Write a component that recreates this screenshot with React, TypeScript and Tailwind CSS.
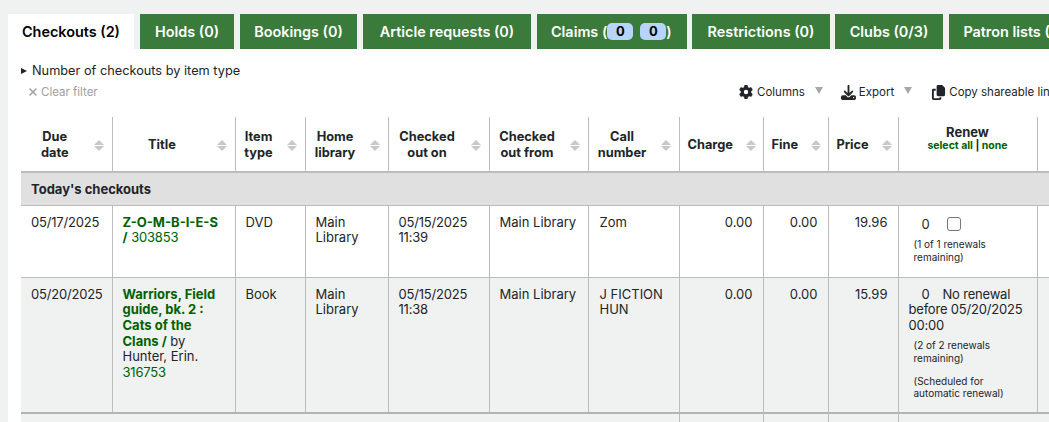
import { FaCopy, FaDownload, FaGear, FaXmark } from "react-icons/fa6";

function Sort() {
  return (
    <span className="flex flex-col items-center gap-[1px]">
      <span className="h-0 w-0 border-x-[5px] border-b-[5px] border-x-transparent border-b-[#c6c8c9]" />
      <span className="h-0 w-0 border-x-[5px] border-t-[5px] border-x-transparent border-t-[#c6c8c9]" />
    </span>
  );
}

function Th({ label }: { label: React.ReactNode }) {
  return (
    <th className="border-x border-b-[2px] border-[#bcbcbc] p-0 align-middle text-[12.8px] font-bold first:border-l-0">
      <div className="flex items-center justify-between gap-[13px] pt-[2px] pr-[8px] pl-[8px]">
        <span className="flex-1 text-center leading-4">{label}</span>
        <Sort />
      </div>
    </th>
  );
}

function Tab({ label, width }: { label: string; width: string }) {
  return <div className={`flex items-center justify-center bg-[#3a7b3c] text-white ${width}`}>{label}</div>;
}

const td = "border border-[#bcbcbc] px-[10px] pt-[9px] align-top leading-[15.7px]";
const tdNum = "border border-[#bcbcbc] px-[10px] pt-[9px] align-top leading-[15.7px] text-right";
const digits = "tracking-[-0.2px]";

export default function App() {
  return (
    <div className="h-[422px] w-[1049px] overflow-hidden bg-[#f0f1f1] pt-[14px] pl-2 font-['Inter','Liberation_Sans',sans-serif] text-[13px] text-[#212529]">
      <div className="flex h-[35px] w-[1100px] gap-[6px] text-[14.4px] font-semibold">
        <div className="flex w-[126px] items-center justify-center bg-white text-black">Checkouts (2)</div>
        <Tab label="Holds (0)" width="w-[94px]" />
        <Tab label="Bookings (0)" width="w-[117px]" />
        <Tab label="Article requests (0)" width="w-[168px]" />
        <div className="mr-[-1px] flex w-[150px] items-center bg-[#3a7b3c] pl-[14px] text-white">
          Claims (
          <span className="h-[17px] w-[26px] rounded-[5px] bg-[#b8d4fb] text-center text-[13px] leading-[17px] font-bold text-black">0</span>
          <span className="ml-[7px] h-[17px] w-[26px] rounded-[5px] bg-[#b8d4fb] text-center text-[13px] leading-[17px] font-bold text-black">0</span>
          )
        </div>
        <Tab label="Restrictions (0)" width="w-[138px] mr-[-1px]" />
        <Tab label="Clubs (0/3)" width="w-[108px]" />
        <Tab label="Patron lists (0)" width="w-[130px]" />
      </div>

      <div className="h-[400px] w-[1100px] bg-white pl-[13px]">
        <div className="flex h-[35px] items-center pt-[8px]">
          <span className="mr-[5px] h-0 w-0 border-y-[3.5px] border-l-[6px] border-y-transparent border-l-[#212529]" />
          <span className="text-[12.75px]">Number of checkouts by item type</span>
        </div>
        <div className="flex h-[33px] items-start text-[11.5px] leading-[16px]">
          <span className="ml-[6px] flex w-[72px] items-center gap-[2px] whitespace-nowrap text-[#a0a0a0]">
            <FaXmark size={12} />Clear filter
          </span>
          <div className="ml-[640px] flex items-center gap-[4px]">
            <FaGear size={14} />
            <span>Columns</span>
            <span className="mb-[4px] ml-[6px] h-0 w-0 border-x-[4px] border-t-[7px] border-x-transparent border-t-[#a8a8a8]" />
          </div>
          <div className="ml-[18px] flex items-center gap-[3px]">
            <FaDownload size={15} />
            <span>Export</span>
            <span className="mb-[4px] ml-[7px] h-0 w-0 border-x-[4px] border-t-[7px] border-x-transparent border-t-[#a8a8a8]" />
          </div>
          <div className="ml-[19px] flex items-center gap-[3px]">
            <FaCopy size={15} />
            <span className="whitespace-nowrap">Copy shareable link</span>
          </div>
        </div>

        <table className="w-[1067px] table-fixed border-collapse text-[13px]">
          <colgroup>
            <col className="w-[91px]" />
            <col className="w-[123px]" />
            <col className="w-[70px]" />
            <col className="w-[83px]" />
            <col className="w-[101px]" />
            <col className="w-[99px]" />
            <col className="w-[91px]" />
            <col className="w-[84px]" />
            <col className="w-[65px]" />
            <col className="w-[70px]" />
            <col className="w-[139px]" />
            <col className="w-[51px]" />
          </colgroup>
          <thead>
            <tr className="h-[55px]">
              <Th label={<>Due<br />date</>} />
              <Th label="Title" />
              <Th label={<>Item<br />type</>} />
              <Th label={<>Home<br />library</>} />
              <Th label={<>Checked<br />out on</>} />
              <Th label={<>Checked<br />out from</>} />
              <Th label={<>Call<br />number</>} />
              <Th label="Charge" />
              <Th label="Fine" />
              <Th label="Price" />
              <th className="border-x border-b-[2px] border-[#bcbcbc] p-0 pb-[11px] align-middle font-bold leading-[14px]">
                Renew
                <div className="mt-[1px] text-[10.5px] leading-[12px] font-bold text-[#006100]">
                  select all <span className="text-[#212529]">|</span> none
                </div>
              </th>
              <th className="border-x border-b-[2px] border-[#bcbcbc]" />
            </tr>
          </thead>
          <tbody>
            <tr className="h-[33px] bg-[#e0e0e0]">
              <td colSpan={12} className="border-y border-[#bcbcbc] px-[10px] pt-[2px] align-middle font-bold">Today's checkouts</td>
            </tr>
            <tr className="h-[72px]">
              <td className={`${td} ${digits} border-l-0`}>05/17/2025</td>
              <td className={td}>
                <span className="font-bold text-[#006100]">Z-O-M-B-I-E-S<br />/</span>{" "}
                <span className={`${digits} text-[#006100]`}>303853</span>
              </td>
              <td className={td}>DVD</td>
              <td className={td}>Main Library</td>
              <td className={`${td} ${digits}`}>05/15/2025 11:39</td>
              <td className={td}>Main Library</td>
              <td className={`${td} pl-[11px]`}>Zom</td>
              <td className={tdNum}>0.00</td>
              <td className={tdNum}>0.00</td>
              <td className={tdNum}>19.96</td>
              <td className="border border-[#bcbcbc] pt-[11px] pl-[15px] align-top leading-[15.7px]">
                <div className="flex items-start">
                  <span className="ml-[8px]">0</span>
                  <span className="ml-[17px] h-[14px] w-[14px] rounded-[3px] border border-[#767676] bg-white" />
                </div>
                <div className="mt-[6px] text-[10px] leading-[13px]">(1 of 1 renewals remaining)</div>
              </td>
              <td className="border border-[#bcbcbc]" />
            </tr>
            <tr className="h-[136px] border-b-[2px] border-[#b4b4b4] bg-[#f0f1f1]">
              <td className={`${td} ${digits} border-l-0`}>05/20/2025</td>
              <td className={td}>
                <span className="font-bold text-[#006100]">Warriors, Field guide, bk. 2 : Cats of the Clans /</span> by Hunter, Erin.{" "}
                <span className={`${digits} text-[#006100]`}>316753</span>
              </td>
              <td className={td}>Book</td>
              <td className={td}>Main Library</td>
              <td className={`${td} ${digits}`}>05/15/2025 11:38</td>
              <td className={td}>Main Library</td>
              <td className={`${td} pl-[11px]`}>J FICTION HUN</td>
              <td className={tdNum}>0.00</td>
              <td className={tdNum}>0.00</td>
              <td className={tdNum}>15.99</td>
              <td className="border border-[#bcbcbc] pt-[9px] pl-[10px] align-top leading-[15.7px]">
                <div className={`w-[120px] ${digits}`}><span className="ml-[13px]">0</span><span className="ml-[13px]">No renewal</span> before 05/20/2025 00:00</div>
                <div className="mt-[5px] pl-[5px] text-[10px] leading-[13px]">(2 of 2 renewals remaining)</div>
                <div className="mt-[10px] pl-[5px] text-[10px] leading-[12.5px]">(Scheduled for<br />automatic renewal)</div>
              </td>
              <td className="border border-[#bcbcbc]" />
            </tr>
            <tr className="h-[20px] bg-[#f0f1f1]">
              <td colSpan={7} />
              <td className="border-x border-[#bcbcbc]" />
              <td className="border-x border-[#bcbcbc]" />
              <td className="border-x border-[#bcbcbc]" />
              <td colSpan={2} />
            </tr>
          </tbody>
        </table>
      </div>
    </div>
  );
}
